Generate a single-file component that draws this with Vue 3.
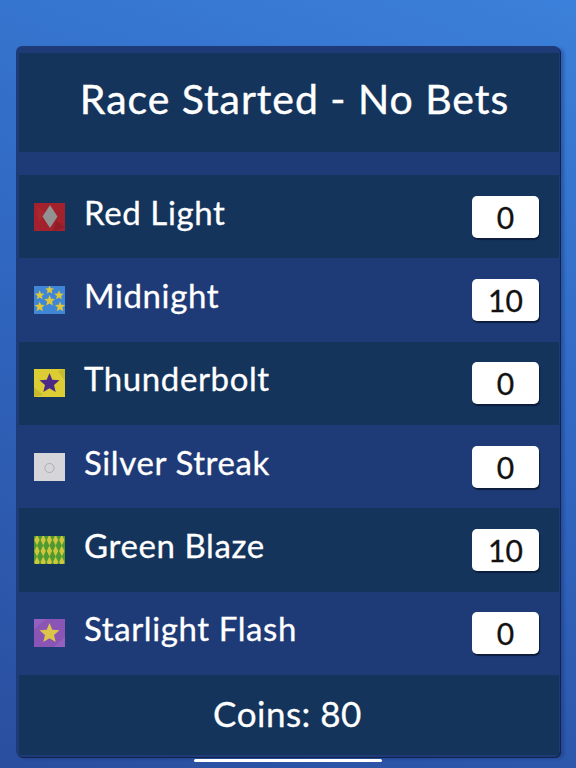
<template>
  <div class="screen">
    <div class="panel">
      <div class="title">Race Started - No Bets</div>
      <div class="spacer"></div>
      <div v-for="(h, idx) in horses" :key="h.name" class="row" :class="{ dark: idx % 2 === 0 }">
        <svg class="flag" viewBox="0 0 31 28" width="31" height="28">
          <template v-if="h.kind === 'red'">
            <rect width="31" height="28" fill="#a3212c" />
            <path d="M2 3 L12 9 L5 20 Z" fill="#a9272f" />
            <path d="M22 18 L31 24 L20 28 Z" fill="#8e1d28" />
            <polygon points="16,2 23.5,13.5 16,25 8.5,13.5" fill="#929292" />
          </template>
          <template v-else-if="h.kind === 'blue'">
            <rect width="31" height="28" fill="#3f86d6" />
            <polygon v-for="(s, i) in blueStars" :key="i" :points="star(s[0], s[1], s[2])" fill="#dcc63c" />
          </template>
          <template v-else-if="h.kind === 'yellow'">
            <rect width="31" height="28" fill="#dccd35" />
            <path d="M0 18 L9 26 L0 28 Z M24 2 L31 0 L31 12 Z" fill="#c9b92e" />
            <polygon :points="star(15.5, 14.5, 10.5)" fill="#4a2a86" />
          </template>
          <template v-else-if="h.kind === 'silver'">
            <rect width="31" height="28" fill="#d6d6da" />
            <circle cx="15.5" cy="15" r="4.6" fill="none" stroke="#aeaeb2" stroke-width="1" />
          </template>
          <template v-else-if="h.kind === 'green'">
            <rect width="31" height="28" fill="#4f9b32" />
            <polygon v-for="(d, i) in diamonds" :key="i" :points="diamond(d[0], d[1])" fill="#cfc63e" />
          </template>
          <template v-else>
            <rect width="31" height="28" fill="#8b55b5" />
            <path d="M0 0 L12 0 L0 10 Z M31 28 L20 28 L31 18 Z" fill="#9560bf" />
            <polygon :points="star(15.5, 14.5, 10.5)" fill="#dcc548" />
          </template>
        </svg>
        <span class="name">{{ h.name }}</span>
        <span class="bet">{{ h.bet }}</span>
      </div>
      <div class="coins">Coins: 80</div>
    </div>
    <div class="home-bar"></div>
  </div>
</template>

<script setup>
const horses = [
  { name: 'Red Light', bet: 0, kind: 'red' },
  { name: 'Midnight', bet: 10, kind: 'blue' },
  { name: 'Thunderbolt', bet: 0, kind: 'yellow' },
  { name: 'Silver Streak', bet: 0, kind: 'silver' },
  { name: 'Green Blaze', bet: 10, kind: 'green' },
  { name: 'Starlight Flash', bet: 0, kind: 'purple' }
]

const blueStars = [
  [15.6, 4, 4.6], [5.7, 9.3, 5], [25, 9.3, 5], [15.6, 14.8, 5.8], [5.7, 20.8, 5.4], [26, 20.8, 5.4]
]

const diamonds = []
for (let x = 3; x < 31; x += 6.2) {
  for (let y = 4; y < 30; y += 11) diamonds.push([x, y])
}

function star(cx, cy, r) {
  const pts = []
  for (let i = 0; i < 10; i++) {
    const rad = i % 2 ? r * 0.45 : r
    const a = -Math.PI / 2 + (i * Math.PI) / 5
    pts.push((cx + rad * Math.cos(a)).toFixed(1) + ',' + (cy + rad * Math.sin(a)).toFixed(1))
  }
  return pts.join(' ')
}

function diamond(x, y) {
  return `${x},${y - 5.5} ${x + 2.6},${y} ${x},${y + 5.5} ${x - 2.6},${y}`
}
</script>

<style>
html, body { margin: 0; background: #2d62bb; }
</style>

<style scoped>
.screen {
  width: 576px; height: 768px; box-sizing: border-box; overflow: hidden;
  position: relative; padding: 46px 16px 11px;
  background: linear-gradient(200deg, #3b80da 0%, #3068c2 45%, #2a4e9e 100%);
  font-family: Lato, "Open Sans", sans-serif; color: #fff;
}
.panel {
  height: 100%; box-sizing: border-box; padding: 7px 1px 2px 3px;
  background: #1f3b77; border-radius: 6px;
  box-shadow: 1px 1px 0 #10224d, 4px 2px 3px rgba(20, 40, 100, 0.35);
  display: flex; flex-direction: column;
}
.title {
  height: 99px; flex: none; background: #14345c;
  display: flex; align-items: center; justify-content: center;
  font-size: 41px; letter-spacing: 0.95px; padding: 0 0 8px 11px; box-sizing: border-box;
  -webkit-text-stroke: 0.4px #fff;
}
.spacer { height: 23px; flex: none; }
.row {
  height: 83.33px; flex: none; box-sizing: border-box;
  display: flex; align-items: center; padding: 0 20px 0 15px;
  background: #1f3b77;
}
.row.dark { background: #14345c; }
.flag { flex: none; margin-right: 19px; }
.name {
  flex: 1; font-size: 33px; letter-spacing: 0.6px; padding-bottom: 10px;
  -webkit-text-stroke: 0.3px #fff;
}
.bet {
  width: 67px; height: 42px; box-sizing: border-box; background: #fff; color: #111;
  border-radius: 5px; box-shadow: 1px 2px 1px #0c1d3c;
  display: flex; align-items: center; justify-content: center;
  font-size: 30px; -webkit-text-stroke: 0.3px #111;
}
.coins {
  flex: 1; background: #14345c;
  display: flex; align-items: center; justify-content: center;
  font-size: 35px; letter-spacing: 0.5px; padding: 0 3px 4px 0;
  -webkit-text-stroke: 0.3px #fff;
}
.home-bar {
  position: absolute; left: 194px; bottom: 6px; width: 188px; height: 3px;
  background: #fff; border-radius: 2px;
}
</style>
